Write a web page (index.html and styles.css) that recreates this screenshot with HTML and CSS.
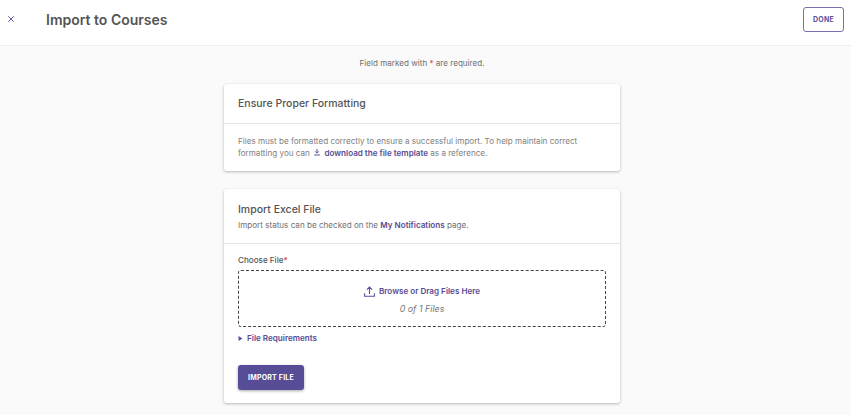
FILE: index.html
```html
<!DOCTYPE html>
<html lang="en">
<head>
    <meta charset="UTF-8">
    <meta name="viewport" content="width=device-width, initial-scale=1.0">
    <title>Import to Courses</title>
    <link rel="stylesheet" href="styles.css">
</head>

<body>
    <div class="page">
        <header class="top-bar">
            <button class="close-btn" aria-label="Close">
                <svg width="8" height="8" viewBox="0 0 8 8"><path d="M1.2 1.2l5.6 5.6M6.8 1.2L1.2 6.8" stroke="#6a5fa6" stroke-width="1" fill="none"/></svg>
            </button>
            <h1 class="page-title">Import to Courses</h1>
            <button class="done-btn">DONE</button>
        </header>

        <main class="content">
            <p class="required-note">Field marked with <span class="star">*</span> are required.</p>

            <section class="card">
                <div class="card-head card-head-single">
                    <h2>Ensure Proper Formatting</h2>
                </div>
                <div class="card-body format-body">
                    <p>Files must be formatted correctly to ensure a successful import. To help maintain correct<br>formatting you can
                        <svg class="download-icon" width="6" height="7" viewBox="0 0 6 7"><path d="M3 0v4M1.2 2.4L3 4.2l1.8-1.8M0.2 6h5.6" stroke="#5b4f9b" stroke-width="1" fill="none"/></svg>
                        <a href="#">download the file template</a> as a reference.</p>
                </div>
            </section>

            <section class="card">
                <div class="card-head card-head-double">
                    <h2>Import Excel File</h2>
                    <p>Import status can be checked on the <a href="#">My Notifications</a> page.</p>
                </div>
                <div class="card-body">
                    <label class="field-label">Choose File<span class="star">*</span></label>
                    <div class="drop-zone">
                        <div class="browse">
                            <svg width="11" height="11" viewBox="0 0 11 11"><path d="M5.5 8V1.2M2.9 3.6l2.6-2.6 2.6 2.6M0.6 7.2v3h9.8v-3" stroke="#5b4f9b" stroke-width="1.1" fill="none"/></svg>
                            <span>Browse or Drag Files Here</span>
                        </div>
                        <div class="file-count">0 of 1 Files</div>
                    </div>
                    <div class="requirements">
                        <svg width="5" height="5" viewBox="0 0 5 5"><path d="M0.5 0l4 2.5-4 2.5z" fill="#5b4f9b"/></svg>
                        <span>File Requirements</span>
                    </div>
                    <button class="import-btn">IMPORT FILE</button>
                </div>
            </section>
        </main>
    </div>
</body>
</html>
```

FILE: styles.css
```css
* {
    margin: 0;
    padding: 0;
    box-sizing: border-box;
}

html, body {
    height: 100%;
    overflow: hidden;
}

body {
    font-family: 'Inter', sans-serif;
    background: #ffffff;
    color: #6b6b6b;
}

button {
    font-family: inherit;
}

a {
    color: #574b94;
    font-weight: 600;
    text-decoration: none;
}

.page {
    width: 851px;
    height: 415px;
    background: #fafafa;
}

.top-bar {
    display: flex;
    align-items: center;
    height: 46px;
    padding: 0 7px 7px 7px;
    background: #ffffff;
    border-bottom: 1px solid #eeeeee;
}

.close-btn {
    display: flex;
    width: 8px;
    height: 8px;
    margin-right: 31px;
    background: none;
    border: none;
}

.page-title {
    flex: 1;
    font-size: 14px;
    font-weight: 600;
    color: #555555;
}

.done-btn {
    width: 41px;
    height: 25px;
    font-size: 7px;
    font-weight: 700;
    letter-spacing: 0.3px;
    color: #5b4f9b;
    background: #ffffff;
    border: 1.5px solid #7a6fb0;
    border-radius: 3px;
}

.content {
    width: 396px;
    margin-left: 224px;
    padding-top: 12px;
}

.required-note {
    margin-bottom: 16px;
    font-size: 8.1px;
    line-height: 10px;
    text-align: center;
    color: #707070;
}

.star {
    color: #e0352f;
}

.card {
    margin-bottom: 18px;
    background: #ffffff;
    border-radius: 3px;
    box-shadow: 0 1px 3px rgba(0, 0, 0, 0.28);
}

.card-head {
    padding: 13px 14px 0;
    border-bottom: 1px solid #e4e4e4;
}

.card-head-single {
    height: 40px;
}

.card-head-double {
    height: 55px;
    padding-top: 14px;
}

.card-head h2 {
    font-size: 10.5px;
    line-height: 14px;
    font-weight: 500;
    color: #555555;
}

.card-head p {
    margin-top: 3px;
    font-size: 8.1px;
    line-height: 11px;
    color: #707070;
}

.card-body {
    padding: 11px 14px 0;
    height: 159px;
}

.format-body {
    height: 47px;
}

.format-body p {
    font-size: 8.1px;
    line-height: 12px;
    color: #808080;
}

.download-icon {
    margin: 0 2px;
}

.field-label {
    display: block;
    font-size: 8.1px;
    line-height: 11px;
    font-weight: 500;
    color: #555555;
}

.drop-zone {
    height: 57px;
    margin-top: 4px;
    padding-top: 14px;
    border: 1px dashed #444444;
    border-radius: 3px;
    text-align: center;
}

.browse {
    display: flex;
    justify-content: center;
    align-items: center;
    gap: 4px;
    font-size: 8.1px;
    line-height: 12px;
    font-weight: 600;
    color: #574b94;
}

.file-count {
    margin-top: 6px;
    font-size: 8.9px;
    line-height: 11px;
    font-style: italic;
    color: #777777;
}

.requirements {
    display: flex;
    align-items: center;
    gap: 4px;
    margin-top: 6px;
    font-size: 8.1px;
    line-height: 11px;
    font-weight: 600;
    color: #574b94;
}

.import-btn {
    display: block;
    width: 66px;
    height: 25px;
    margin-top: 21px;
    font-size: 7px;
    font-weight: 700;
    letter-spacing: 0.2px;
    color: #ffffff;
    background: #574d97;
    border: none;
    border-radius: 3px;
    box-shadow: 0 1px 3px rgba(0, 0, 0, 0.35);
}
```
